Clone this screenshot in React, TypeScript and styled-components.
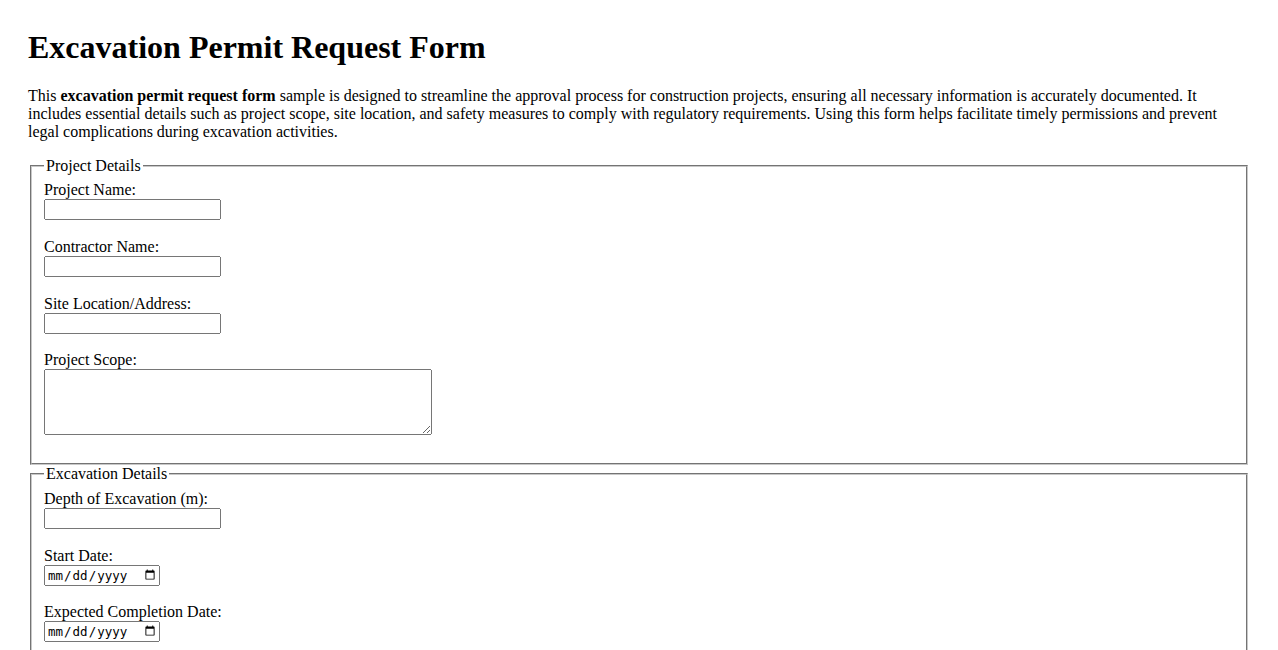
import React from "react";
import styled, { createGlobalStyle } from "styled-components";

const GlobalStyle = createGlobalStyle`
    html, body {
        margin: 0;
        padding: 0;
        background: #fff;
    }
    body {
        font-family: "Liberation Serif", "Times New Roman", serif;
        font-size: 16px;
        color: #000;
    }
`;

const Page = styled.div`
    display: flow-root;
    padding: 8px 28px;
`;

const Title = styled.h1`
    font-size: 32px;
    font-weight: bold;
    margin: 21.44px 0 20.44px;
`;

const Intro = styled.p`
    margin: 16px 0;
    line-height: 18px;
`;

const Section = styled.fieldset`
    margin: 0 2px;
    padding: 6.6px 12px 10.6px;
    border: 2px groove rgb(200, 200, 200);
    min-width: min-content;
`;

const Legend = styled.legend`
    padding: 0 2px;
`;

const Field = styled.div`
    margin-bottom: 17.6px;
`;

const Label = styled.label`
    display: block;
`;

const TextInput = styled.input`
    display: block;
    box-sizing: border-box;
    width: 177px;
    height: 21px;
    margin: 0;
    font-size: 13.33px;
`;

const DateInput = styled.input`
    display: block;
    box-sizing: border-box;
    width: 116px;
    height: 21px;
    margin: 0;
    font-family: "DejaVu Sans Mono", monospace;
    font-size: 12.5px;
`;

const Area = styled.textarea`
    display: block;
    box-sizing: border-box;
    width: 388px;
    height: 66px;
    margin: 0;
`;

const App = () => {
    return (
        <Page>
            <GlobalStyle />
            <Title>Excavation Permit Request Form</Title>
            <Intro>
                This <strong>excavation permit request form</strong> sample is designed to streamline the approval process for construction projects, ensuring all necessary information is accurately documented. It includes essential details such as project scope, site location, and safety measures to comply with regulatory requirements. Using this form helps facilitate timely permissions and prevent legal complications during excavation activities.
            </Intro>
            <form>
                <Section>
                    <Legend>Project Details</Legend>
                    <Field>
                        <Label htmlFor="projectName">Project Name:</Label>
                        <TextInput type="text" id="projectName" />
                    </Field>
                    <Field>
                        <Label htmlFor="contractorName">Contractor Name:</Label>
                        <TextInput type="text" id="contractorName" />
                    </Field>
                    <Field>
                        <Label htmlFor="siteLocation">Site Location/Address:</Label>
                        <TextInput type="text" id="siteLocation" />
                    </Field>
                    <Field>
                        <Label htmlFor="projectScope">Project Scope:</Label>
                        <Area id="projectScope" />
                    </Field>
                </Section>
                <Section>
                    <Legend>Excavation Details</Legend>
                    <Field>
                        <Label htmlFor="depth">Depth of Excavation (m):</Label>
                        <TextInput type="number" id="depth" />
                    </Field>
                    <Field>
                        <Label htmlFor="startDate">Start Date:</Label>
                        <DateInput type="date" id="startDate" />
                    </Field>
                    <Field>
                        <Label htmlFor="endDate">Expected Completion Date:</Label>
                        <DateInput type="date" id="endDate" />
                    </Field>
                    <Field>
                        <Label htmlFor="safety">Safety Measures:</Label>
                        <Area id="safety" />
                    </Field>
                </Section>
            </form>
        </Page>
    );
};

export default App;
